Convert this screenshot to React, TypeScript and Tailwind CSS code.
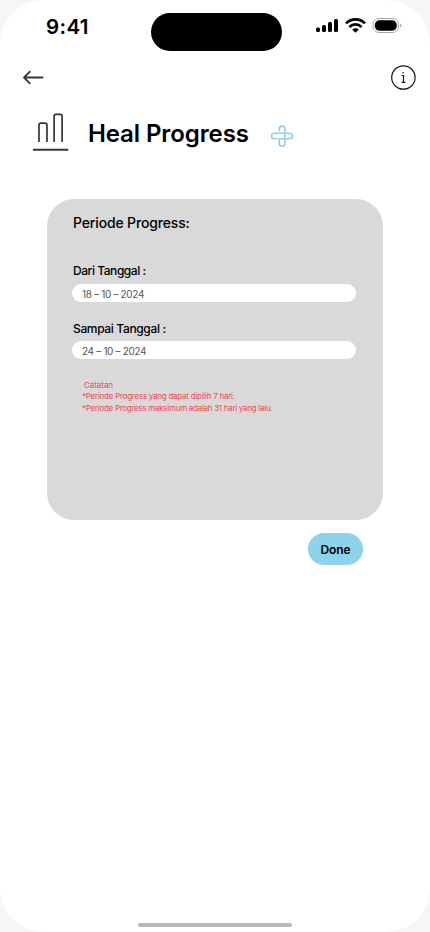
import React from "react";

function StatusBar() {
  return (
    <header className="flex h-[51px] items-start">
      <div className="ml-[46px] mt-[13px] w-[105px] text-[20.5px] font-semibold leading-[28px] tracking-[0.4px]">9:41</div>
      <div className="mt-[13px] h-[38px] w-[131px] rounded-full bg-black" />
      <svg className="ml-[34px] mt-[17px]" width="86" height="18" viewBox="316 17 86 18">
        <rect x="316" y="27.4" width="4" height="4.6" rx="1.6" />
        <rect x="322" y="25" width="4" height="7" rx="1.6" />
        <rect x="328" y="22" width="4" height="10" rx="1.6" />
        <rect x="334" y="19" width="4" height="13" rx="1.6" />
        <g fill="none" stroke="#000" strokeWidth="2.7">
          <path d="M346 23.4C351.3 18.1 359.7 18.1 365 23.4" />
          <path d="M349.4 27C353 23.6 358 23.6 361.6 27" />
        </g>
        <path d="M355.5 32.8L352.2 29.4C354.1 27.7 356.9 27.7 358.8 29.4Z" />
        <rect x="373" y="18.5" width="25.6" height="14" rx="6.2" fill="none" stroke="#a5a5a5" />
        <rect x="374.8" y="20.3" width="22" height="10.4" rx="4.6" />
        <path d="M400.2 23.4C402 24.1 402 26.8 400.2 27.5Z" fill="#a5a5a5" />
      </svg>
    </header>
  );
}

function DateField({ label, value, labelStyle }: { label: string; value: string; labelStyle: string }) {
  return (
    <div>
      <div className={`ml-px h-4 text-[12px] font-medium ${labelStyle}`}>{label}</div>
      <div className="mt-[5px] h-[18px] w-[284px] rounded-full bg-white pl-[10px] text-[10px] leading-[20px] tracking-[-0.33px] text-[#555]">{value}</div>
    </div>
  );
}

export default function App() {
  return (
    <div className="h-[932px] w-[430px] overflow-hidden bg-[#f6f6f6] font-['Inter','Liberation_Sans',sans-serif] text-black">
      <main className="flex h-full flex-col whitespace-nowrap rounded-[44px] bg-white">
        <StatusBar />
        <nav className="mt-[13px] flex h-[27px] items-center justify-between pl-[22px] pr-[14px]">
          <svg width="22" height="16" viewBox="0 0.5 22 16" fill="none" stroke="#35353d" strokeWidth="1.8" strokeLinecap="round" strokeLinejoin="round">
            <path d="M20.6 8H2M7.8 2.2L2 8L7.8 13.8" />
          </svg>
          <svg width="26" height="26" viewBox="0 0.5 26 26" fill="none" stroke="#111" strokeWidth="1.2">
            <circle cx="13.4" cy="13" r="11.7" />
            <path d="M11.6 11H13.5V17.8M11.6 17.9H15.4" strokeWidth="1.1" />
            <circle cx="13.1" cy="8.3" r="0.8" fill="#111" stroke="none" />
          </svg>
        </nav>
        <div className="mt-[21px] flex h-10 items-start pl-[33px]">
          <svg width="36" height="40" viewBox="0 0 36 40" fill="none" stroke="#35353d" strokeWidth="1.7">
            <path d="M6 30V13.2Q6 11.2 8 11.2H12Q14 11.2 14 13.2V30M21.1 30V4.4Q21.1 2.4 23.1 2.4H27.1Q29.1 2.4 29.1 4.4V30" />
            <path d="M0 37.8H35.3" strokeWidth="2" />
          </svg>
          <h1 className="ml-[18px] mt-[6px] w-[183px] pl-px text-[24px] font-semibold leading-8 tracking-[-0.1px]">Heal Progress</h1>
          <svg className="mt-[12px]" width="24" height="24" viewBox="0 0 24 24" fill="none" stroke="#94cce9" strokeWidth="1.6" strokeLinecap="round">
            <path d="M6.8 14.8H4.3A2.8 2.8 0 0 1 4.3 9.2H19.6A2.8 2.8 0 0 1 19.6 14.8H9.3V19.5A2.8 2.8 0 0 0 14.9 19.5V4.9A2.8 2.8 0 0 0 9.3 4.9V6.8" />
          </svg>
        </div>
        <section className="ml-[47px] mt-[47px] h-[321px] w-[336px] rounded-[27px] bg-[#d9d9d9] pl-[25px] pt-[14px]">
          <h2 className="ml-px text-[14px] font-medium leading-5 tracking-[-0.15px]">Periode Progress:</h2>
          <div className="mt-[30px] flex flex-col gap-[18px]">
            <DateField label="Dari Tanggal :" value="18 – 10 – 2024" labelStyle="leading-4 tracking-[-0.45px]" />
            <DateField label="Sampai Tanggal :" value="24 – 10 – 2024" labelStyle="leading-[17px] tracking-[-0.35px]" />
          </div>
          <div className="ml-[10px] mt-[21px] text-[8px] leading-[11.5px] text-[#ec4a50]">
            <p className="pl-[2px] tracking-[-0.05px]">Catatan</p>
            <p className="-mt-px mb-px tracking-[-0.25px]">*Periode Progress yang dapat dipilih 7 hari.</p>
            <p className="tracking-[-0.28px]">*Periode Progress maksimum adalah 31 hari yang lalu.</p>
          </div>
        </section>
        <button className="ml-[308px] mt-[13px] h-8 w-[55px] rounded-full bg-[#8dd3eb] pt-px text-[12px] font-semibold tracking-[-0.05px]">Done</button>
        <div className="mb-[5px] ml-[138px] mt-auto h-1 w-[154px] rounded-full bg-[#b8b8b8]" />
      </main>
    </div>
  );
}
